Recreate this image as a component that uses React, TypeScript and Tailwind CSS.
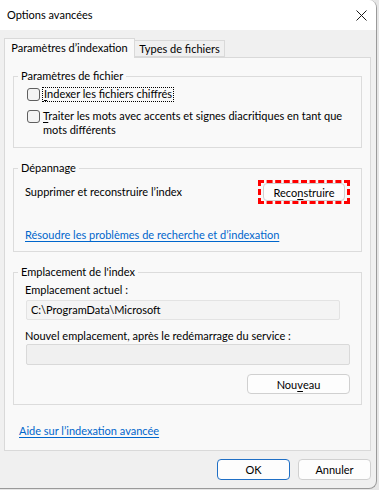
import type { ReactNode } from 'react'

function cn(...classes: Array<string | false | null | undefined>) {
  return classes.filter(Boolean).join(' ')
}

function Key({ children }: { children: ReactNode }) {
  return <span className="underline underline-offset-[2px]">{children}</span>
}

function Checkbox() {
  return (
    <span className="inline-block h-[13px] w-[13px] shrink-0 rounded-[3px] border border-[#5f5f5f] bg-[#f3f3f3]" />
  )
}

function Button({
  children,
  className,
  primary = false,
}: {
  children: ReactNode
  className?: string
  primary?: boolean
}) {
  return (
    <button
      type="button"
      className={cn(
        'flex items-center justify-center rounded-[4px] border bg-[#fdfdfd] text-[11px] leading-none text-black',
        primary ? 'border-[#1f6fc5]' : 'border-[#d0d0d0]',
        className
      )}
    >
      {children}
    </button>
  )
}

function Group({
  title,
  className,
  children,
}: {
  title: string
  className?: string
  children: ReactNode
}) {
  return (
    <fieldset
      className={cn(
        'ml-[8px] w-[349px] border border-[#dcdcdc]',
        className
      )}
    >
      <legend className="ml-[4px] px-[3px] leading-[16px]">{title}</legend>
      {children}
    </fieldset>
  )
}

export default function App() {
  return (
    <div className="h-[490px] w-[379px] bg-[#e6e6e6] font-['Lato',sans-serif] text-[11px] text-black">
      <div className="flex h-[489px] w-[377px] flex-col overflow-hidden rounded-r-[8px] border-b border-r border-[#9a9a9a] bg-[#f0f0f0]">
        {/* title bar */}
        <div className="flex h-[30px] shrink-0 items-center justify-between bg-white pl-[7px] pr-[8px]">
          <span className="text-[11px]">Options avancées</span>
          <svg width="11" height="11" viewBox="0 0 11 11" className="mr-[1px]">
            <path d="M0.5 0.5 L10.5 10.5 M10.5 0.5 L0.5 10.5" stroke="#1a1a1a" strokeWidth="1" />
          </svg>
        </div>

        <div className="pl-[4px] pt-[7px]">
          {/* tabs */}
          <div className="relative z-10 flex h-[20px] items-end">
            <div className="-mb-px flex h-[20px] w-[131px] items-center justify-center border-x border-t border-[#d9d9d9] bg-[#f9f9f9] pb-[1px]">
              Paramètres d’indexation
            </div>
            <div className="flex h-[17px] w-[90px] items-center justify-center border-b border-r border-t border-[#d9d9d9] bg-[#f0f0f0] pt-[1px]">
              Types de fichiers
            </div>
          </div>

          {/* tab page */}
          <div className="flex h-[394px] w-[367px] flex-col border border-[#d9d9d9] bg-[#f9f9f9]">
            <Group title="Paramètres de fichier" className="mt-[10px] pb-[10px]">
              <div className="mt-[3px] flex h-[15px] items-center pl-[13px]">
                <Checkbox />
                <span className="ml-[2px] flex h-[15px] items-center border border-dotted border-black px-[1px]">
                  <Key>I</Key>ndexer les fichiers chiffrés
                </span>
              </div>
              <div className="mt-[7px] flex items-start pl-[13px]">
                <span className="mt-[1px]">
                  <Checkbox />
                </span>
                <span className="ml-[3px] w-[305px] leading-[14px]">
                  <Key>T</Key>raiter les mots avec accents et signes diacritiques en tant que mots différents
                </span>
              </div>
            </Group>

            <Group title="Dépannage" className="mt-[12px] pb-[9px]">
              <div className="mt-[4px] flex items-center justify-between pl-[11px] pr-[11px]">
                <span>Supprimer et reconstruire l’index</span>
                <div className="border-[3px] border-dashed border-[#ff0000] px-[2px]">
                  <Button className="h-[18px] w-[82px]">
                    Reco<Key>n</Key>struire
                  </Button>
                </div>
              </div>
              <div className="mt-[24px] pl-[11px] leading-[14px]">
                <span className="text-[#0066cc] underline underline-offset-[2px]">
                  Résoudre les problèmes de recherche et d’indexation
                </span>
              </div>
            </Group>

            <Group title="Emplacement de l'index" className="mt-[12px] pb-[10px]">
              <div className="mt-[3px] pl-[11px] leading-[14px]">Emplacement actuel :</div>
              <div className="ml-[12px] mt-[3px] flex h-[20px] w-[314px] items-center rounded-[2px] border border-[#e3e3e3] bg-[#f4f4f4] pl-[4px]">
                C:\ProgramData\Microsoft
              </div>
              <div className="mt-[9px] pl-[11px] leading-[14px]">
                Nouvel emplacement, après le redémarrage du service :
              </div>
              <div className="ml-[12px] mt-[1px] h-[21px] w-[324px] rounded-[2px] border border-[#d9d9d9] bg-[#f0f0f0]" />
              <div className="mt-[9px] flex justify-end pr-[11px]">
                <Button className="h-[20px] w-[103px]">
                  Nou<Key>v</Key>eau
                </Button>
              </div>
            </Group>

            <div className="ml-[14px] mt-[19px] leading-[14px]">
              <span className="text-[#0066cc] underline underline-offset-[2px]">
                Aide sur l’indexation avancée
              </span>
            </div>
          </div>

          {/* dialog buttons */}
          <div className="mt-[8px] flex w-[367px] justify-end gap-[8px]">
            <Button primary className="h-[21px] w-[73px]">
              OK
            </Button>
            <Button className="h-[21px] w-[73px]">Annuler</Button>
          </div>
        </div>
      </div>
    </div>
  )
}
